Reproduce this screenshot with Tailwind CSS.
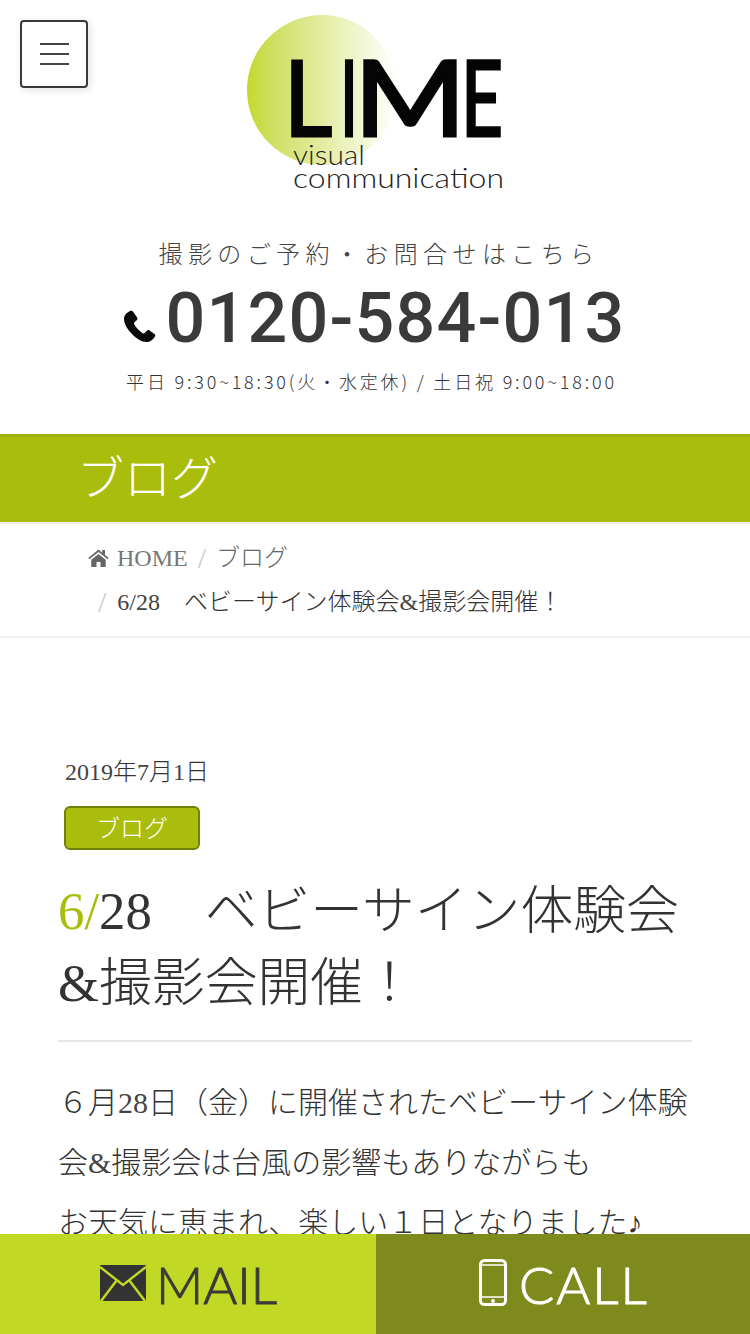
<!doctype html>
<html lang="ja">
<head>
<meta charset="utf-8">
<script src="https://cdn.jsdelivr.net/npm/@tailwindcss/browser@4"></script>
</head>
<body class="bg-white">
<div class="relative w-[750px] h-[1334px] overflow-hidden text-[#333] font-['Liberation_Serif','Noto_Sans_CJK_JP',serif]">

  <button class="absolute left-[20px] top-[20px] w-[68px] h-[68px] rounded-[4px] border-2 border-[#3a3a3a] bg-white shadow-[2px_2px_8px_rgba(0,0,0,0.12)] flex flex-col items-center justify-center gap-[8px]">
    <span class="block w-[29px] h-[2px] bg-[#444]"></span>
    <span class="block w-[29px] h-[2px] bg-[#444]"></span>
    <span class="block w-[29px] h-[2px] bg-[#444]"></span>
  </button>

  <header class="flex flex-col items-center pt-[15px] h-[434px]">
    <div class="relative w-[258px] h-[178px] ml-[1px]">
      <div class="absolute left-0 top-0 w-[150px] h-[150px] rounded-full bg-gradient-to-r from-[#c4d82a] via-[#e3eca0] to-white"></div>
      <svg class="absolute left-0 top-0" width="258" height="178" viewBox="0 0 258 178">
        <text y="120.500" font-family="Lato, sans-serif" font-weight="400" font-size="105" stroke="#050505" stroke-width="3" fill="#050505"><tspan x="37" textLength="48" lengthAdjust="spacingAndGlyphs">L</tspan><tspan x="93" textLength="18" lengthAdjust="spacingAndGlyphs">I</tspan><tspan x="107" textLength="112" lengthAdjust="spacingAndGlyphs">M</tspan><tspan x="214" textLength="42" lengthAdjust="spacingAndGlyphs">E</tspan></text>
        <text x="46" y="150" font-family="Lato, sans-serif" font-weight="300" font-size="28" textLength="72" lengthAdjust="spacingAndGlyphs" fill="#222">visual</text>
        <text x="46" y="173" font-family="Lato, sans-serif" font-weight="300" font-size="28" textLength="211" lengthAdjust="spacingAndGlyphs" fill="#222">communication</text>
      </svg>
    </div>
    <p class="mt-[42px] text-[24px] leading-[36px] tracking-[5.4px] text-[#444] font-['Noto_Sans_CJK_JP',sans-serif] font-light ml-[8px]">撮影のご予約・お問合せはこちら</p>
    <div class="mt-[11px] flex items-end h-[72px]">
      <svg class="mb-[11px] mr-[10px] -ml-[2px]" width="33" height="34" viewBox="0 0 33 33"><path d="M7 1.500C3.500 3 1 6 1 9.500c0 5 3.500 10.500 8 15 4.500 4.500 9.500 8 14.500 8 3.500 0 6.500-2 8.500-5.500.5-1 .3-1.800-.5-2.500l-5-3.500c-1-.7-2-.5-2.800.3l-2 2.200c-.6.6-1.300.6-2 .2-3.500-2.300-6.500-5.500-8.500-9-.4-.7-.3-1.500.3-2l2.200-2c.8-.8 1-1.800.4-2.800L10 2c-.7-.9-2-1-3-.5z" fill="#0a0a0a"/></svg>
      <span class="font-['Roboto',sans-serif] font-medium text-[70px] leading-[72px] tracking-[1.2px] text-[#3a3a3a]">0120-584-013</span>
    </div>
    <p class="mt-[13px] mr-[7px] text-[18px] leading-[28px] tracking-[2.82px] text-[#333] font-['Noto_Sans_CJK_JP',sans-serif] font-light">平日 9:30~18:30(火・水定休) / 土日祝 9:00~18:00</p>
  </header>

  <div class="h-[90px] bg-[#a9bd0c] border-t-[3px] border-t-[#9fb208] border-b-2 border-b-[#eeeeea] pl-[77px] text-white text-[47px] font-light leading-[84px]">ブログ</div>

  <nav class="h-[114px] border-b-2 border-b-[#f0f0f0] pl-[88px] pt-[12px] text-[24px] leading-[44px]">
    <div class="flex items-center text-[#666]">
      <svg class="mr-[8px]" width="21" height="18" viewBox="0 0 21 18"><path d="M10.500 0.500 0.300 9l1.100 1.300L10.500 2.900l9.100 7.400L20.700 9 17 6V1h-2.800v2.700zM3.300 10.800V18h5.200v-5h4v5h5.200v-7.200L10.500 5z" fill="#666"/></svg>
      <span class="text-[#777]">HOME</span>
      <span class="text-[#ccc] text-[30px] mx-[10px]">/</span>
      <span class="font-light">ブログ</span>
    </div>
    <div class="flex items-center text-[#333] pl-[10px]">
      <span class="text-[#ccc] text-[30px] mr-[11px]">/</span>
      <span class="whitespace-pre font-light"><span class="font-normal text-[#444]">6/28</span>　ベビーサイン体験会<span class="font-normal text-[#444]">&amp;</span>撮影会開催！</span>
    </div>
  </nav>

  <main class="px-[58px] pt-[110px]">
    <p class="pl-[7px] text-[24px] leading-[48px] font-light"><span class="font-normal text-[#444]">2019</span>年<span class="font-normal text-[#444]">7</span>月<span class="font-normal text-[#444]">1</span>日</p>
    <div class="ml-[6px] mt-[10px] w-[136px] h-[44px] rounded-[6px] bg-[#aabd0c] border-2 border-[#71820b] text-white text-[24px] font-light leading-[42px] text-center">ブログ</div>
    <h1 class="mt-[25px] text-[52.800px] leading-[72px] pb-[21px] border-b-2 border-b-[#e6e6e6] font-light"><span class="font-normal"><span class="text-[#a9bd0c]">6/</span>28</span>　ベビーサイン体験会<span class="font-normal">&amp;</span>撮影会開催！</h1>
    <p class="mt-[31px] text-[30px] leading-[60px] font-light">６月<span class="font-normal text-[#444]">28</span>日（金）に開催されたベビーサイン体験会<span class="font-normal text-[#444]">&amp;</span>撮影会は台風の影響もありながらも<br>お天気に恵まれ、楽しい１日となりました♪</p>
  </main>

  <div class="fixed left-0 bottom-0 w-[750px] h-[100px] flex">
    <a class="w-[376px] bg-[#c1d925] flex items-center pl-[100px] text-[#3a3a3a]">
      <svg class="mr-[10px] mb-[3px]" width="46" height="36" viewBox="0 0 46 36"><rect width="46" height="36" rx="1" fill="#333"/><path d="M0 2 23 20 46 2M1 36 17 15M45 36 29 15" fill="none" stroke="#c1d925" stroke-width="2.500"/></svg>
      <span class="font-['Lato',sans-serif] font-light text-[52px] leading-[60px] -mt-[1px] tracking-[0px] [-webkit-text-stroke:1px_#3a3a3a]">MAIL</span>
    </a>
    <a class="w-[374px] bg-[#7e8a1c] flex items-center pl-[103px] text-white">
      <svg class="mr-[12px] mb-[3px]" width="28" height="47" viewBox="0 0 28 47"><rect x="1.500" y="1.500" width="25" height="44" rx="4" fill="none" stroke="#fff" stroke-width="3"/><rect x="2" y="6" width="24" height="32" fill="none" stroke="#fff" stroke-width="1.500"/><circle cx="14" cy="42" r="2" fill="#fff"/></svg>
      <span class="font-['Lato',sans-serif] font-light text-[52px] leading-[60px] -mt-[1px] tracking-[2px] [-webkit-text-stroke:1px_#fff]">CALL</span>
    </a>
  </div>
</div>
</body>
</html>
